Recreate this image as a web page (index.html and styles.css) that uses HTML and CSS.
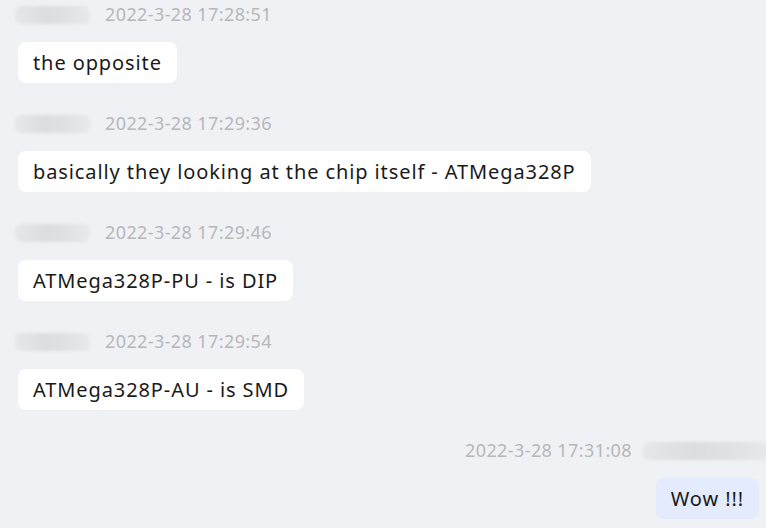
FILE: index.html
```html
<!DOCTYPE html>
<html>
<head>
<meta charset="utf-8">
<link rel="stylesheet" href="styles.css">
</head>
<body>
<div class="chat">
  <div class="msg">
    <div class="meta"><span class="name n1"></span><span class="time">2022-3-28 17:28:51</span></div>
    <div class="bubble">the opposite</div>
  </div>
  <div class="msg">
    <div class="meta"><span class="name"></span><span class="time">2022-3-28 17:29:36</span></div>
    <div class="bubble">basically they looking at the chip itself - ATMega328P</div>
  </div>
  <div class="msg">
    <div class="meta"><span class="name"></span><span class="time">2022-3-28 17:29:46</span></div>
    <div class="bubble">ATMega328P-PU - is DIP</div>
  </div>
  <div class="msg">
    <div class="meta"><span class="name"></span><span class="time">2022-3-28 17:29:54</span></div>
    <div class="bubble">ATMega328P-AU - is SMD</div>
  </div>
  <div class="msg mine">
    <div class="meta"><span class="time">2022-3-28 17:31:08</span><span class="name wide"></span></div>
    <div class="bubble">Wow !!!</div>
  </div>
</div>
</body>
</html>
```
FILE: styles.css
```css
html, body {
  margin: 0;
  padding: 0;
  background: #f0f1f5;
  overflow: hidden;
}
.chat {
  width: 766px;
  height: 528px;
  padding-top: 5px;
  box-sizing: border-box;
  display: flex;
  flex-direction: column;
  gap: 31px;
  font-family: "Noto Sans", "Open Sans", sans-serif;
}
.msg {
  display: flex;
  flex-direction: column;
  align-items: flex-start;
  gap: 17px;
  padding-left: 18px;
}
.msg.mine {
  align-items: flex-end;
  padding-left: 0;
  padding-right: 7px;
}
.meta {
  display: flex;
  align-items: flex-start;
  height: 20px;
  gap: 15px;
  margin-left: -3px;
}
.mine .meta {
  margin-left: 0;
  margin-right: -10px;
  gap: 11px;
}
.name {
  display: block;
  width: 75px;
  height: 18px;
  margin-top: 1px;
  border-radius: 6px;
  background: linear-gradient(90deg, #e6e7ea 0%, #dcdde1 40%, #e0e1e4 70%, #e8e9ec 100%);
  filter: blur(1.5px);
}
.name.wide {
  width: 126px;
}
.time {
  font-size: 18px;
  color: #b7b7bb;
  line-height: 19px;
  letter-spacing: 0.4px;
}
.bubble {
  background: #ffffff;
  border-radius: 8px;
  padding: 0 15px;
  height: 41px;
  line-height: 41px;
  font-size: 20px;
  letter-spacing: 0.9px;
  color: #1a1a1a;
  white-space: nowrap;
}
.mine .bubble {
  background: #e3ebfd;
}
```
